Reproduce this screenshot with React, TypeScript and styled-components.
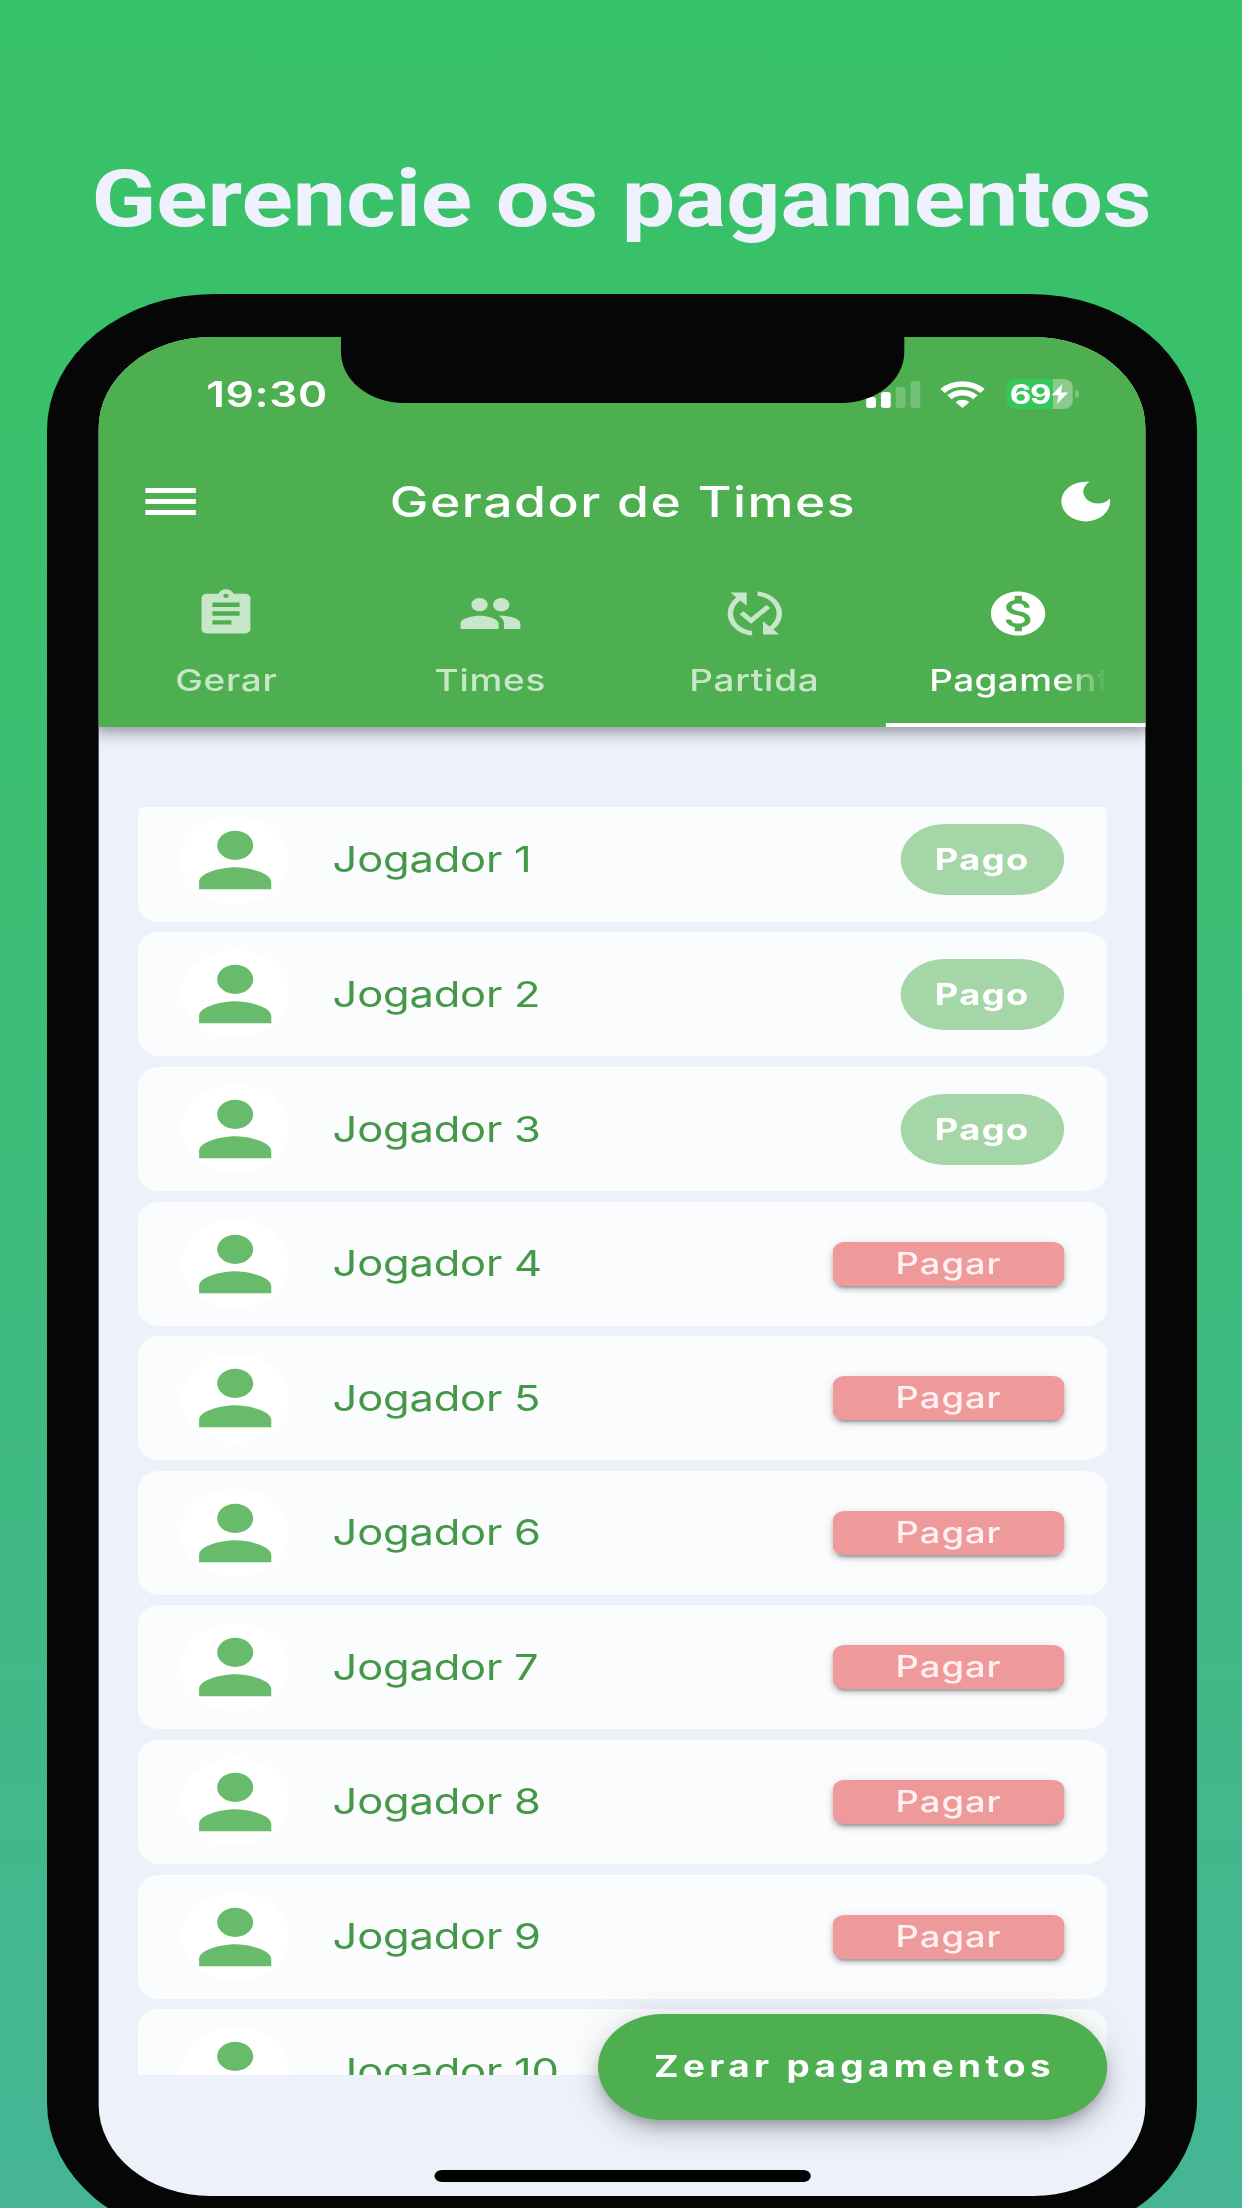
import React, { Component } from 'react'
import styled, { createGlobalStyle, css } from 'styled-components'
import {
  MdAssignment,
  MdDarkMode,
  MdMonetizationOn,
  MdPeople,
  MdPerson,
  MdPublishedWithChanges
} from 'react-icons/md'

const GlobalStyle = createGlobalStyle`
  * {
    box-sizing: border-box;
  }
  body {
    margin: 0;
  }
`

const Poster = styled.main`
  width: 1242px;
  height: 2208px;
  overflow: hidden;
  display: flex;
  flex-direction: column;
  background: linear-gradient(180deg, #38c267 0%, #3abf6e 30%, #45b595 100%);
  font-family: Inter, 'Liberation Sans', sans-serif;
`
const Headline = styled.h1`
  flex: none;
  margin: 0;
  height: 294px;
  padding: 151px 0 0 91.5px;
  font-family: Roboto, sans-serif;
  font-size: 80px;
  line-height: 96px;
  font-weight: 700;
  color: #f0f1ff;
  white-space: nowrap;
  transform: scaleX(1.188);
  transform-origin: 91.5px 0;
`

// the phone is stretched sideways as a whole, everything inside uses the unstretched sizes
const Phone = styled.div`
  flex: none;
  width: 935px;
  height: 1945px;
  margin-left: 46.8px;
  padding: 43px 42px;
  border-radius: 136px;
  background: #060606;
  transform: scaleX(1.23);
  transform-origin: 0 0;
`
const Screen = styled.div`
  position: relative;
  height: 1859px;
  overflow: hidden;
  border-radius: 91px;
  background: #edf1fa;
`
const AppFrame = styled.div`
  width: 858.5px;
  height: 100%;
  margin-left: -3.5px;
  display: flex;
  flex-direction: column;
`
const Notch = styled.div`
  position: absolute;
  top: -1px;
  left: 196.5px;
  width: 458.5px;
  height: 67px;
  border-radius: 0 0 51px 51px;
  background: #060606;
`
const Header = styled.header`
  flex: none;
  height: 390px;
  background: #4daf50;
  color: #fff;
  box-shadow: 0 4px 9px -2px rgba(0, 0, 0, 0.2),
    0 9px 11px rgba(0, 0, 0, 0.14), 0 2px 22px rgba(0, 0, 0, 0.12);
`
const StatusBar = styled.div`
  height: 103px;
  padding: 11px 58px 0 91px;
  display: flex;
  align-items: center;
`
const Clock = styled.span`
  flex: 1;
  font-size: 36px;
  font-weight: 600;
  letter-spacing: 0.5px;
`
const Signal = styled.div`
  display: flex;
  align-items: flex-end;
  gap: 4.2px;
  height: 27px;
`
const SignalBar = styled.i<{ $height: number; $on: boolean }>`
  width: 7.8px;
  height: ${p => p.$height}px;
  border-radius: 2.5px;
  background: ${p => (p.$on ? '#fff' : 'rgba(255, 255, 255, 0.22)')};
`
const Wifi = styled.svg`
  width: 36.6px;
  height: 27px;
  margin: 0 17px 0 16px;
`
const Battery = styled.div`
  display: flex;
  align-items: center;
  justify-content: center;
  width: 54.5px;
  height: 29.5px;
  border-radius: 8px;
  background: linear-gradient(90deg, #34c759 70%, rgba(255, 255, 255, 0.35) 70%);
  font-size: 27px;
  font-weight: 700;
  letter-spacing: -1px;
`
const Bolt = styled.svg`
  flex: none;
  width: 15px;
  height: 20px;
`
const BatteryTip = styled.i`
  width: 3px;
  height: 8px;
  margin-left: 2px;
  border-radius: 0 3px 3px 0;
  background: rgba(255, 255, 255, 0.3);
`
const Toolbar = styled.div`
  height: 124px;
  padding: 0 26px 1px 41.5px;
  display: flex;
  align-items: center;
`
const MenuButton = styled.div`
  width: 40.6px;
  height: 27px;
  display: flex;
  flex-direction: column;
  justify-content: space-between;
`
const MenuLine = styled.i`
  height: 5px;
  background: #fff;
`
const AppTitle = styled.h2`
  flex: 1;
  margin: 0;
  padding-right: 2px;
  text-align: center;
  font-size: 42px;
  line-height: 50px;
  font-weight: 500;
  letter-spacing: 1.25px;
`
const ThemeIcon = styled(MdDarkMode)`
  width: 53px;
  height: 53px;
`
const TabBar = styled.nav`
  display: flex;
  height: 163px;
`
const Tab = styled.div<{ $active: boolean }>`
  flex: 1;
  min-width: 0;
  display: flex;
  flex-direction: column;
  align-items: center;
  gap: 20px;
  padding: 23px 35px 0;
  color: ${p => (p.$active ? '#fff' : '#c8e6c9')};
  border-bottom: 4.5px solid ${p => (p.$active ? '#fff' : 'transparent')};
  svg {
    flex: none;
    width: 53px;
    height: 53px;
  }
`
const TabLabel = styled.span<{ $fade: boolean }>`
  max-width: 100%;
  overflow: hidden;
  white-space: nowrap;
  font-size: 30px;
  line-height: 40px;
  font-weight: 500;
  letter-spacing: 0.6px;
  ${p =>
    p.$fade &&
    css`
      letter-spacing: 0.3px;
      mask-image: linear-gradient(90deg, #000 72%, transparent 100%);
    `}
`
const PlayerList = styled.section`
  flex: none;
  height: 1268px;
  margin: 80px 35px 0;
  overflow: hidden;
`
const PlayerCard = styled.article`
  display: flex;
  align-items: center;
  gap: 36px;
  height: 124px;
  margin-bottom: 10.6px;
  padding: 0 35.2px;
  border-radius: 18px;
  background: #fbfcfe;
  &:first-child {
    margin-top: -9.2px;
  }
`
const Avatar = styled.div`
  display: flex;
  align-items: center;
  justify-content: center;
  width: 88px;
  height: 88px;
  border-radius: 50%;
  background: #fff;
  color: #67bb6a;
`
const PlayerName = styled.span`
  flex: 1;
  margin-left: -0.5px;
  font-size: 35.3px;
  letter-spacing: -0.15px;
  color: #449847;
`
const PaidBadge = styled.span`
  width: 133px;
  height: 71px;
  border-radius: 36px;
  background: #a5d6a7;
  color: #fff;
  font-size: 29.5px;
  line-height: 70px;
  font-weight: 700;
  text-align: center;
  letter-spacing: 1.1px;
`
const PayButton = styled.button`
  width: 187.5px;
  height: 44px;
  padding: 0 0 2px;
  border: 0;
  border-radius: 9px;
  background: #ee9a9a;
  color: #fff0f1;
  font-family: inherit;
  font-size: 29.5px;
  line-height: 40px;
  font-weight: 500;
  letter-spacing: 0.85px;
  box-shadow: 0 6px 2px -4px rgba(0, 0, 0, 0.2),
    0 4px 4px rgba(0, 0, 0, 0.14), 0 2px 10px rgba(0, 0, 0, 0.12);
`
const ResetButton = styled.button`
  position: absolute;
  right: 31.5px;
  bottom: 76.5px;
  width: 414px;
  height: 106px;
  padding: 0 0 1px 4px;
  border: 0;
  border-radius: 53px;
  background: #4daf50;
  color: #fff;
  font-family: inherit;
  font-size: 30px;
  font-weight: 700;
  letter-spacing: 3.55px;
  box-shadow: 0 7px 11px -2px rgba(0, 0, 0, 0.2),
    0 13px 22px rgba(0, 0, 0, 0.14), 0 2px 38px rgba(0, 0, 0, 0.1);
`
const HomeIndicator = styled.div`
  position: absolute;
  left: 272.5px;
  bottom: 14px;
  width: 306.5px;
  height: 12px;
  border-radius: 6px;
  background: #000;
`

interface IPlayer {
  name: string
  paid: boolean
}
interface IState {
  activeTab: string
  players: IPlayer[]
}

const tabs = [
  { label: 'Gerar', icon: MdAssignment },
  { label: 'Times', icon: MdPeople },
  { label: 'Partida', icon: MdPublishedWithChanges },
  { label: 'Pagamentos', icon: MdMonetizationOn }
]

class App extends Component<{}, IState> {
  state: IState = {
    activeTab: 'Pagamentos',
    players: Array.from({ length: 10 }, (_, i) => ({
      name: `Jogador ${i + 1}`,
      paid: i < 3
    }))
  }

  handlePay = (name: string) => {
    const players = this.state.players.map(p =>
      p.name === name ? { ...p, paid: true } : p
    )
    this.setState({ players })
  }

  handleReset = () => {
    const players = this.state.players.map(p => ({ ...p, paid: false }))
    this.setState({ players })
  }

  public render() {
    const { activeTab, players } = this.state
    return (
      <Poster>
        <GlobalStyle />
        <Headline>Gerencie os pagamentos</Headline>
        <Phone>
          <Screen>
            <AppFrame>
              <Header>
                <StatusBar>
                  <Clock>19:30</Clock>
                  <Signal>
                    <SignalBar $height={11} $on />
                    <SignalBar $height={16} $on />
                    <SignalBar $height={21} $on={false} />
                    <SignalBar $height={27} $on={false} />
                  </Signal>
                  <Wifi viewBox="0 0 17 12" preserveAspectRatio="none">
                    <g fill="none" stroke="#fff" strokeWidth="2.4">
                      <path d="M0.95 4.45A10.7 10.7 0 0 1 16.05 4.45" />
                      <path d="M3.6 7.2A7 7 0 0 1 13.4 7.2" />
                    </g>
                    <path
                      d="M8.5 12L5.9 9.4A3.8 3.8 0 0 1 11.1 9.4Z"
                      fill="#fff"
                    />
                  </Wifi>
                  <Battery>
                    69
                    <Bolt viewBox="0 0 14 19">
                      <path d="M9 0L0.5 10.6H6L4.6 19L13.5 8H7.8Z" fill="#fff" />
                    </Bolt>
                  </Battery>
                  <BatteryTip />
                </StatusBar>
                <Toolbar>
                  <MenuButton>
                    <MenuLine />
                    <MenuLine />
                    <MenuLine />
                  </MenuButton>
                  <AppTitle>Gerador de Times</AppTitle>
                  <ThemeIcon />
                </Toolbar>
                <TabBar>
                  {tabs.map(({ label, icon: Icon }) => (
                    <Tab
                      key={label}
                      $active={label === activeTab}
                      onClick={() => this.setState({ activeTab: label })}
                    >
                      <Icon />
                      <TabLabel $fade={label.length > 8}>{label}</TabLabel>
                    </Tab>
                  ))}
                </TabBar>
              </Header>
              <PlayerList>
                {players.map(({ name, paid }) => (
                  <PlayerCard key={name}>
                    <Avatar>
                      <MdPerson size={88} />
                    </Avatar>
                    <PlayerName>{name}</PlayerName>
                    {paid ? (
                      <PaidBadge>Pago</PaidBadge>
                    ) : (
                      <PayButton onClick={() => this.handlePay(name)}>
                        Pagar
                      </PayButton>
                    )}
                  </PlayerCard>
                ))}
              </PlayerList>
            </AppFrame>
            <ResetButton onClick={this.handleReset}>
              Zerar pagamentos
            </ResetButton>
            <HomeIndicator />
            <Notch />
          </Screen>
        </Phone>
      </Poster>
    )
  }
}
export default App
